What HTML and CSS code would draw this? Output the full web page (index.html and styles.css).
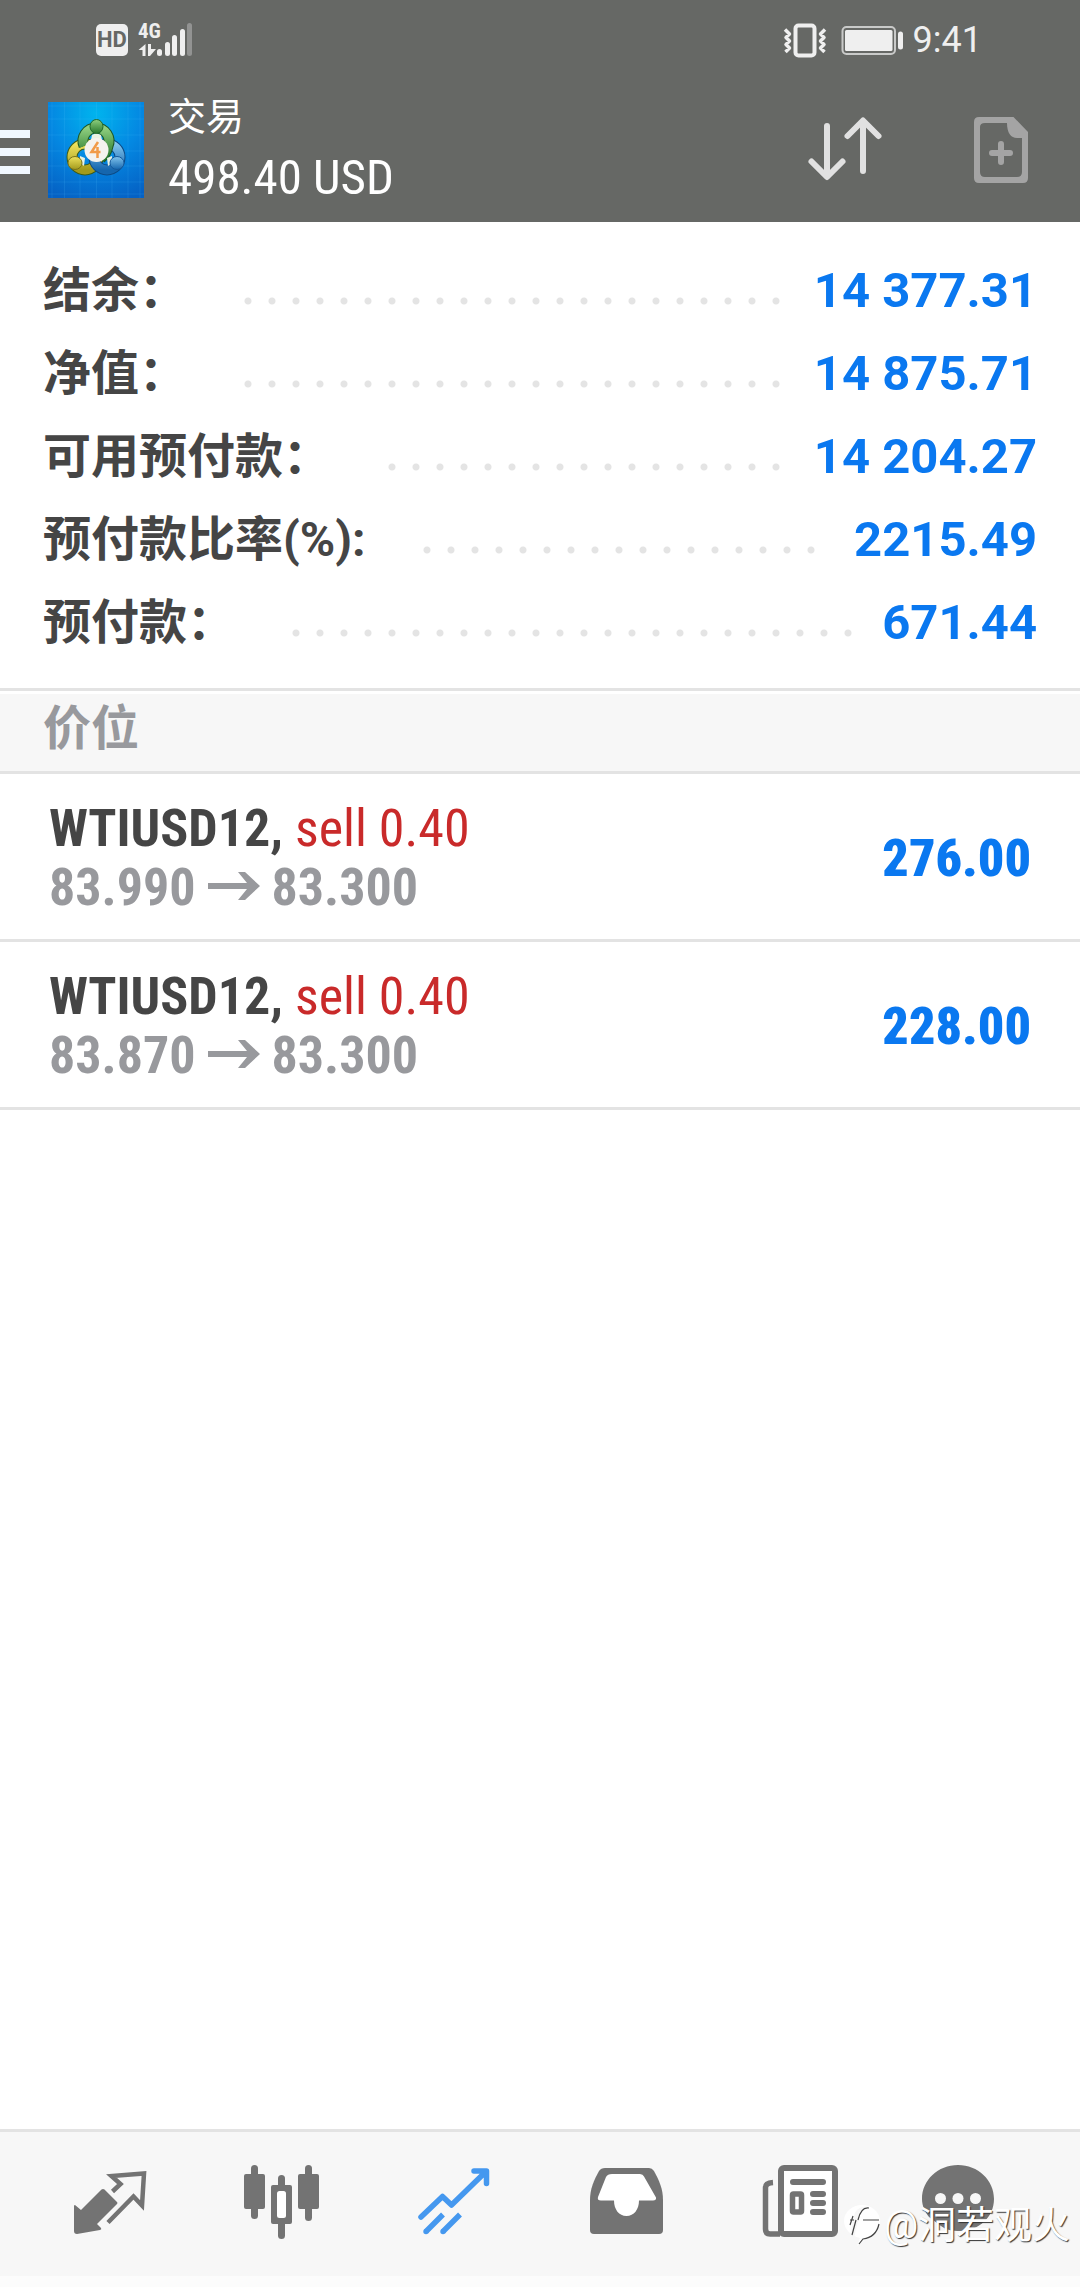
FILE: index.html
```html
<!DOCTYPE html>
<html lang="zh-CN">
<head>
<meta charset="utf-8">
<meta name="viewport" content="width=device-width">
<title>交易</title>
<link rel="stylesheet" href="styles.css">
</head>
<body>
<header class="header">
  <div class="status">
    <span class="hd">HD</span>
    <svg class="signal" width="56" height="44" viewBox="137 17 56 44" role="img" aria-label="4G">
      <text class="net" x="138" y="37">4G</text>
      <path d="M145.500 43v12h-3v-6h-4zM148 43h3v5h5l-6 7h-2z" fill="#efefef"/>
      <g fill="#efefef"><rect x="157" y="48" width="5" height="7" rx="2.500"/><rect x="165" y="41" width="5" height="14" rx="2.500"/><rect x="172" y="34" width="5" height="21" rx="2.500"/><rect x="180" y="28" width="5" height="27" rx="2.500"/></g>
      <rect x="187" y="22" width="5" height="33" rx="2.500" fill="#929392"/>
    </svg>
    <svg class="vibrate" width="44" height="36" viewBox="785 21 44 36" fill="none" stroke="#efefef" aria-hidden="true">
      <rect x="797.500" y="24.500" width="19" height="30" rx="3" stroke-width="4"/>
      <path d="M787 28.500l4.500 4.500-3.500 3.500 3.500 3.500-3.500 3.500 3.500 3.500-4 4M827 28.500l-4.500 4.500 3.500 3.500-3.500 3.500 3.500 3.500-3.500 3.500 4 4" stroke-width="3.500" stroke-linejoin="round"/>
    </svg>
    <svg width="62" height="36" viewBox="843 21 62 36" aria-hidden="true">
      <rect x="844.500" y="26" width="52.500" height="27" rx="4" fill="none" stroke="#c9cac9" stroke-width="2"/>
      <rect x="847" y="29" width="47.500" height="21" rx="1.500" fill="#efefef"/>
      <rect x="900" y="30.500" width="5" height="18" rx="2.500" fill="#efefef"/>
    </svg>
    <time class="clock">9:41</time>
  </div>
  <div class="bar">
    <button class="menu" aria-label="菜单"><span></span><span></span><span></span></button>
    <svg class="logo" width="96" height="96" viewBox="0 0 96 96" role="img" aria-label="MetaTrader 4">
      <defs>
        <radialGradient id="sky" cx=".5" cy=".12" r=".95"><stop offset="0" stop-color="#00b4ee"/><stop offset=".5" stop-color="#0488e2"/><stop offset="1" stop-color="#0561c4"/></radialGradient>
        <linearGradient id="green" x2="0" y2="1"><stop offset="0" stop-color="#8fcf7f"/><stop offset="1" stop-color="#27772c"/></linearGradient>
        <linearGradient id="gold" x2="0" y2="1"><stop offset="0" stop-color="#eee25c"/><stop offset="1" stop-color="#a39a1d"/></linearGradient>
        <linearGradient id="blue" x2="0" y2="1"><stop offset="0" stop-color="#82c5ee"/><stop offset="1" stop-color="#1566ae"/></linearGradient>
      </defs>
      <rect width="96" height="96" fill="url(#sky)"/>
      <path d="M4 0v96M16.500 0v96M32 0v96M48.500 0v96M64 0v96M80 0v96M92 0v96M0 4h96M0 17h96M0 33h96M0 49h96M0 64h96M0 80h96M0 92h96" stroke="#5bc4ff" stroke-opacity=".14" fill="none"/>
      <g fill="none" stroke-width="9">
        <circle cx="37" cy="55" r="13" stroke="#3c5c18" stroke-width="11"/><circle cx="37" cy="55" r="13" stroke="url(#gold)"/>
        <circle cx="59" cy="55" r="13" stroke="#0c4a85" stroke-width="11"/><circle cx="59" cy="55" r="13" stroke="url(#blue)"/>
        <path d="M36 44a13 13 0 1 1 24 0c-1 5-3 9-7 12" stroke="#1c5524" stroke-width="11"/><path d="M36 44a13 13 0 1 1 24 0c-1 5-3 9-7 12" stroke="url(#green)"/>
      </g>
      <path d="M44 33l4-2 5 2 1 5H43zM32 54l5 2-1 8-4-3zM64 54l-5 2 1 8 4-3z" fill="#e9f2e2"/>
      <ellipse cx="48.500" cy="24.500" rx="6.500" ry="7" fill="url(#green)" stroke="#1f6829"/>
      <ellipse cx="27" cy="61" rx="7" ry="6.500" fill="url(#gold)" stroke="#77711b"/>
      <ellipse cx="69" cy="61" rx="7" ry="6.500" fill="url(#blue)" stroke="#14589b"/>
      <circle cx="48.500" cy="48" r="12" fill="#f4f2ee"/>
      <path d="M50 40l-6.500 10h9M49.500 45v11" fill="none" stroke="#f19a48" stroke-width="2.500"/>
    </svg>
    <div class="heading"><h1>交易</h1><p>498.40 USD</p></div>
    <button class="tool" aria-label="排序">
      <svg width="76" height="72" viewBox="808 115 76 72" fill="none" stroke="#e1e1e1" stroke-width="6" stroke-linecap="round" stroke-linejoin="round"><path d="M828 127v50M812.500 162.500l15.500 15.500 15.500-15.500M864 172v-50M848.500 137l15.500-15.500 15.500 15.500"/></svg>
    </button>
    <button class="tool" aria-label="新订单">
      <svg width="58" height="72" viewBox="973 114 58 72"><path d="M980 117h34.500l14.500 15v46q0 5-5 5h-44q-5 0-5-5v-56q0-5 5-5zm1 10v45q0 5 5 5h32q5 0 5-5v-34h-5c-6 0-10-5-10-15h-22q-5 0-5 4z" fill="#a4a4a4" fill-rule="evenodd"/><path d="M1002 144v18M993 153h18" stroke="#a4a4a4" stroke-width="6" stroke-linecap="round"/></svg>
    </button>
  </div>
</header>

<main class="main">
  <dl class="summary">
    <div class="line"><dt>结余：</dt><dd>14 377.31</dd></div>
    <div class="line"><dt>净值：</dt><dd>14 875.71</dd></div>
    <div class="line"><dt>可用预付款：</dt><dd>14 204.27</dd></div>
    <div class="line"><dt>预付款比率(%):</dt><dd>2215.49</dd></div>
    <div class="line"><dt>预付款：</dt><dd>671.44</dd></div>
  </dl>
  <section class="positions">
    <h2>价位</h2>
    <ul>
      <li>
        <div><p class="symbol">WTIUSD12, <span class="side">sell 0.40</span></p><p class="price">83.990 <svg class="arrow" viewBox="0 0 52 28" role="img" aria-label="至"><path d="M0 11h39L30 0h7l15 14-15 14h-7l9-11H0z" fill="currentColor"/></svg> 83.300</p></div>
        <strong class="profit">276.00</strong>
      </li>
      <li>
        <div><p class="symbol">WTIUSD12, <span class="side">sell 0.40</span></p><p class="price">83.870 <svg class="arrow" viewBox="0 0 52 28" role="img" aria-label="至"><path d="M0 11h39L30 0h7l15 14-15 14h-7l9-11H0z" fill="currentColor"/></svg> 83.300</p></div>
        <strong class="profit">228.00</strong>
      </li>
    </ul>
  </section>
</main>

<footer class="footer">
  <nav class="tabs">
    <a href="#quotes" aria-label="行情"><svg viewBox="60 50 100 84"><path d="M75 95l6 5 20.500-20.500q1.500-1 3 0L117 92q1 1 0 2L97 114l4 4q1 1.500-1 2L77 124q-3 0-3-3V96q0-1 1-1z" fill="#737373"/><path d="M112.500 81.500l8-7.500-9-8 32.500-2.500-2 32-8.500-9-25.500 26" fill="none" stroke="#737373" stroke-width="4.500"/></svg></a>
    <a href="#chart" aria-label="图表"><svg viewBox="232 50 100 84"><g fill="#737373"><rect x="244" y="64" width="21" height="35" rx="2"/><rect x="251" y="55" width="7" height="54" rx="3.500"/><rect x="298" y="64" width="21" height="35" rx="2"/><rect x="305" y="55" width="7" height="56" rx="3.500"/><rect x="271" y="75" width="21" height="39" rx="2"/><rect x="278" y="65" width="7" height="64" rx="3.500"/></g><rect x="277" y="81" width="9" height="27" rx="2.500" fill="#fff"/></svg></a>
    <a href="#trade" aria-label="交易" aria-current="page"><svg viewBox="404 50 100 84"><g fill="none" stroke="#4598ef" stroke-width="5.500" stroke-linecap="round" stroke-linejoin="round"><path d="M421 107l21.500-20.500 9 8.500 34.500-33.500M474 61h12.500v12.500"/></g><path d="M426 121.500l17-17M443 121.500l17-17" fill="none" stroke="#4598ef" stroke-width="5.500"/><circle cx="426" cy="121.500" r="2.700" fill="#4598ef"/><circle cx="443" cy="121.500" r="2.700" fill="#4598ef"/></svg></a>
    <a href="#history" aria-label="历史"><svg viewBox="576 50 100 84"><path d="M605 58h44q3 0 5 3c5 9 9 18 9 29v30q0 4-4 4h-65q-4 0-4-4V90c0-11 4-20 9-29q2-3 6-3z" fill="#737373"/><path d="M612 64h28q3 0 4 2.500l12 21q.500 3-3 3h-14c0 9-5 15.500-12.500 15.500S614 99.500 614 90.500h-13q-4 0-3-3.500l8-20q1.500-3 6-3z" fill="#fff"/></svg></a>
    <a href="#news" aria-label="新闻"><svg viewBox="748 50 100 84" fill="none" stroke="#737373"><rect x="781" y="58" width="54" height="66" rx="3" fill="#fff" stroke-width="6"/><path d="M780 124h-10q-4.500 0-4.500-5V77.500q0-4.500 7.500-5" fill="none" stroke-width="5.500"/><path d="M793 72h30M813 84h10M813 93h10M813 102h10" stroke-width="6" stroke-linecap="round"/><rect x="792.500" y="84" width="9" height="18" rx="1" stroke-width="5.500"/></svg></a>
    <a href="#messages" aria-label="消息"><svg viewBox="920 50 100 84"><path d="M958 55c20 0 36 15 36 34 0 18-15 32-34 32-8 0-14-1-19-5l-12-9c-4-5-7-11-7-18 0-19 16-34 36-34z" fill="#737373"/><g fill="#f7f7f7"><circle cx="940.500" cy="88.500" r="5.500"/><circle cx="958" cy="88.500" r="5.500"/><circle cx="975.500" cy="88.500" r="5.500"/></g></svg></a>
  </nav>
  <div class="watermark">
    <svg width="38" height="44" viewBox="842 2207 38 44" aria-hidden="true">
      <path d="M861 2209c10 0 18 7 18 16s-7 18-15 18l-8 7 3-8c-9-2-16-9-16-17 0-9 8-16 18-16z" fill="#fff"/>
      <path d="M867 2211c-6 0-8 4-9 10l-5 21-4-1 4-21c1-5 5-10 14-9z" fill="#f7f7f7"/>
      <path d="M868 2212c-6-1-9 3-11 12m-8 0h4m9 0h16M849 2229l3-9M855 2224l-4 15M878 2228c-2 9-8 14-16 15l-4 5" fill="none" stroke="#444" stroke-width="1.200"/>
    </svg>
    <span>@洞若观火</span>
  </div>
</footer>
</body>
</html>
```
FILE: styles.css
```css
* {
  box-sizing: border-box;
}

body,
h1,
h2,
p,
dl,
dd,
ul {
  margin: 0;
  padding: 0;
}

body {
  display: flex;
  flex-direction: column;
  min-height: 100vh;
  background: #fff;
  color: #454545;
  font-family: Roboto, "Noto Sans CJK SC", sans-serif;
}

svg {
  display: block;
}

button {
  padding: 0;
  border: 0;
  background: none;
}

/* Header */
.header {
  background: #666865;
  color: #fff;
}

.status {
  display: flex;
  align-items: center;
  height: 80px;
  padding: 0 98px 0 96px;
}

.hd {
  width: 32px;
  border-radius: 5px;
  background: #efefef;
  color: #666865;
  font-size: 22px;
  font-weight: 700;
  line-height: 32px;
  text-align: center;
}

.signal {
  margin-left: 9px;
}

.net {
  fill: #efefef;
  font-family: "Roboto Condensed", Roboto, sans-serif;
  font-size: 21px;
  font-weight: 700;
}

.vibrate {
  margin-left: auto;
  margin-right: 14px;
}

.clock {
  margin-left: 10px;
  color: #efefef;
  font-size: 36px;
  line-height: 36px;
}

.bar {
  display: flex;
  align-items: center;
  height: 142px;
  padding: 0 50px 2px 0;
}

.menu {
  display: flex;
  flex-direction: column;
  gap: 10px;
  width: 30px;
  margin-right: 18px;
  padding-top: 4px;
}

.menu span {
  height: 8px;
  background: #f0f8ff;
}

.heading {
  flex: 1;
  padding: 6px 0 0 24px;
}

.heading h1 {
  font-size: 38px;
  font-weight: 400;
  line-height: 50px;
}

.heading p {
  font-family: "Roboto Condensed", Roboto, sans-serif;
  font-size: 49px;
  line-height: 72px;
}

.tool + .tool {
  margin-left: 89px;
}

/* Account summary */
.main {
  flex: 1;
}

.summary {
  padding: 27px 43px 24px;
}

.line {
  display: flex;
  align-items: center;
  height: 83px;
  font-size: 48px;
  font-weight: 700;
  line-height: 78px;
}

.line::before {
  content: "";
  order: 1;
  flex: 1;
  height: 24px;
  margin: 20px 29px 0 57px;
  background: radial-gradient(circle at 4px 12px, #e4e4e4 3px, transparent 4px) 0 0 / 24px 24px;
}

.line dd {
  order: 2;
  color: #0a78f0;
  font-size: 49px;
}

/* Open positions */
.positions {
  border-top: 3px solid #e3e3e3;
  padding-top: 3px;
}

.positions h2 {
  padding: 0 43px 7px;
  background: #f7f7f7;
  color: #98999d;
  font-size: 48px;
  font-weight: 700;
  line-height: 70px;
}

.positions ul {
  border-top: 3px solid #e3e3e3;
  list-style: none;
  font-family: "Roboto Condensed", Roboto, sans-serif;
  font-size: 52px;
  font-weight: 700;
  line-height: 59px;
}

.positions li {
  display: flex;
  align-items: center;
  justify-content: space-between;
  height: 168px;
  padding: 3px 49px 0;
  border-bottom: 3px solid #e3e3e3;
}

.side {
  color: #c92a2a;
  font-weight: 400;
}

.price {
  color: #98999d;
}

.arrow {
  display: inline-block;
  width: 52px;
  height: 28px;
  vertical-align: 5px;
}

.profit {
  color: #0a78f0;
}

/* Bottom tabs */
.footer {
  position: relative;
  padding-bottom: 11px;
  background: #fcfcfc;
}

.tabs {
  display: grid;
  grid-template-columns: repeat(6, 1fr);
  height: 147px;
  padding: 0 24px;
  border-top: 3px solid #e3e3e3;
  background: #f7f7f7;
}

.tabs a {
  display: flex;
  justify-content: center;
  padding-top: 28px;
}

.tabs svg {
  width: 100px;
  height: 84px;
}

.watermark {
  position: absolute;
  right: 10px;
  bottom: 36px;
  display: flex;
  align-items: center;
  gap: 3px;
  color: #fff;
  font-size: 38px;
  line-height: 52px;
  text-shadow: 1px 1px 1px #333;
}
```
